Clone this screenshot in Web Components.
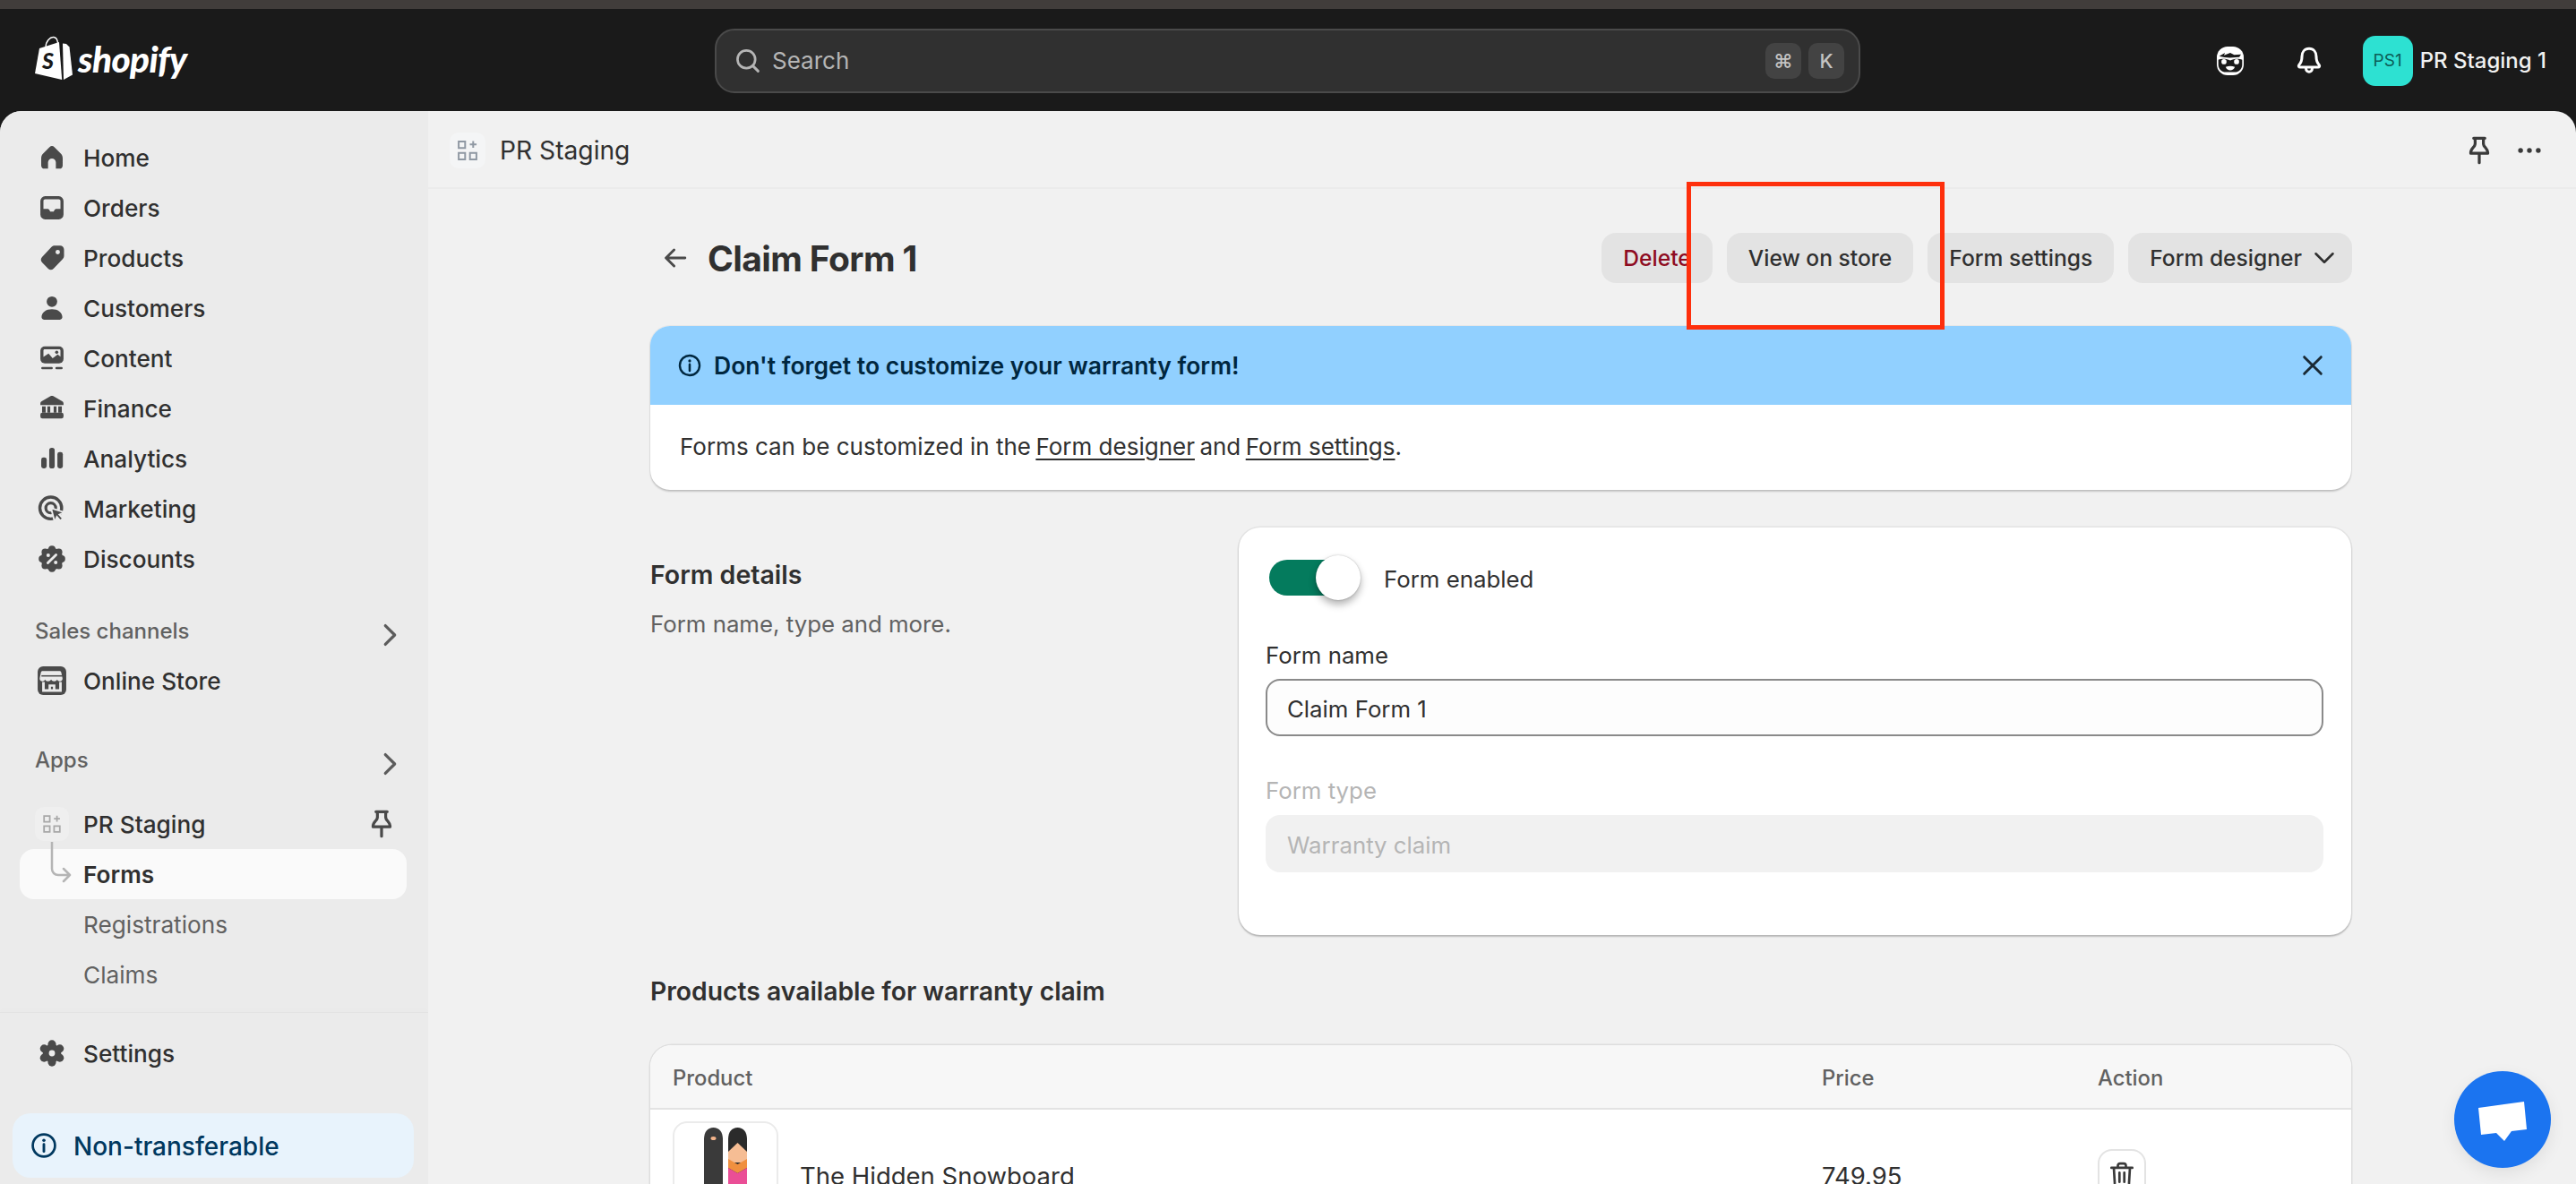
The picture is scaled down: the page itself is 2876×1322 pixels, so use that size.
<!DOCTYPE html>
<html lang="en">
<head>
<meta charset="utf-8">
<title>Claim Form 1</title>
<style>
  html, body { margin: 0; padding: 0; height: 100%; }
  body { width: 2876px; height: 1322px; overflow: hidden; background: #1a1a1a; color: #303030;
         font-family: Inter, "Liberation Sans", sans-serif; font-size: 25px; }
</style>
</head>
<body>
<shop-app></shop-app>

<script>
const ICONS = {
  home: `<path fill="currentColor" d="M10 3.2c-.5 0-1 .2-1.400.6L4.800 7.600c-.7.700-1.100 1.600-1.100 2.600v4.500c0 1 .8 1.800 1.800 1.800H7.700v-3.700a2.300 2.300 0 0 1 4.600 0v3.700h2.200c1 0 1.800-.8 1.800-1.800v-4.500c0-1-.4-1.900-1.100-2.600l-3.800-3.800c-.4-.4-.9-.6-1.400-.6z"/>`,
  orders: `<path fill="currentColor" fill-rule="evenodd" d="M6 3.200h8a2.800 2.800 0 0 1 2.800 2.800v8a2.800 2.800 0 0 1-2.800 2.800H6a2.800 2.800 0 0 1-2.800-2.800V6A2.800 2.800 0 0 1 6 3.200zM6 5c-.6 0-1 .4-1 1v4.600h2.400c.5 0 .9.300 1.100.700l.5 1h2l.5-1c.2-.4.600-.7 1.100-.7H15V6c0-.6-.4-1-1-1z"/>`,
  tag: `<path fill="currentColor" fill-rule="evenodd" d="M11.600 2.800h3.200c1.300 0 2.300 1 2.300 2.300v3.600c0 .8-.3 1.500-.9 2.100l-5.300 5.500c-.9.900-2.200.9-3.100 0l-3.600-3.700c-.9-.9-.9-2.200 0-3.100l5.400-5.800c.5-.6 1.200-.9 2-.9zM13.400 5.300a1.300 1.300 0 1 0 0 2.600 1.300 1.300 0 0 0 0-2.600z"/>`,
  person: `<circle cx="10" cy="6.200" r="3.100" fill="currentColor"/><path fill="currentColor" d="M3.900 15.300c0-2.900 2.700-4.700 6.100-4.700s6.100 1.800 6.100 4.700c0 .8-.6 1.500-1.400 1.500H5.300c-.8 0-1.400-.7-1.400-1.500z"/>`,
  content: `<rect x="3.200" y="3" width="13.600" height="10" rx="2.600" fill="currentColor"/><path fill="#ebebeb" d="M5 5.400c0-.4.300-.7.700-.7h8.600c.4 0 .7.300.7.700v3.700l-1.600-1.300-3 2.200-2.400-2.700L5 9.200z"/><circle cx="12.800" cy="6.500" r=".95" fill="currentColor"/><rect x="3.700" y="15.100" width="6.800" height="1.400" rx=".7" fill="currentColor"/><rect x="12" y="15.100" width="4.300" height="1.400" rx=".7" fill="currentColor"/>`,
  bank: `<path fill="currentColor" d="M9.200 2.800c.5-.3 1.100-.3 1.600 0l5.200 3c.5.300.8.800.8 1.300V8H3.200v-.9c0-.5.300-1 .8-1.300zM4.200 8.800h2.100v3.700H4.200zM7.300 8.800h1.700v3.700H7.300zM11 8.800h1.700v3.700H11zM13.700 8.800h2.100v3.700h-2.100z"/><rect x="3.200" y="12.500" width="13.600" height="3.400" rx="1.200" fill="currentColor"/>`,
  bars: `<rect x="3.700" y="9.400" width="3.200" height="6.400" rx="1.300" fill="currentColor"/><rect x="8.400" y="3.700" width="3.200" height="12.100" rx="1.500" fill="currentColor"/><rect x="13.200" y="6.200" width="3.200" height="9.600" rx="1.300" fill="currentColor"/>`,
  target: `<circle cx="9.300" cy="9.600" r="6.400" fill="none" stroke="currentColor" stroke-width="1.800"/><circle cx="9.300" cy="9.600" r="2.900" fill="none" stroke="currentColor" stroke-width="1.700"/><path fill="currentColor" stroke="#ebebeb" stroke-width="1" d="M9.500 9.700l7.900 2.500-3 1.300 2 2.200-1.500 1.400-2-2.300-1.300 3z"/>`,
  discount: `<g fill="currentColor"><circle cx="10" cy="10" r="6.500"/><circle cx="10" cy="4.300" r="2.100"/><circle cx="10" cy="15.700" r="2.100"/><circle cx="4.300" cy="10" r="2.100"/><circle cx="15.700" cy="10" r="2.100"/><circle cx="6" cy="6" r="2.100"/><circle cx="14" cy="6" r="2.100"/><circle cx="6" cy="14" r="2.100"/><circle cx="14" cy="14" r="2.100"/></g><path d="M12.400 7.600l-4.800 4.800" stroke="#ebebeb" stroke-width="1.500" stroke-linecap="round"/><circle cx="7.800" cy="7.900" r="1.050" fill="#ebebeb"/><circle cx="12.200" cy="12.100" r="1.050" fill="#ebebeb"/>`,
  store: `<rect x="1.600" y="1.600" width="16.800" height="16.800" rx="3.200" fill="currentColor"/><path fill="#ebebeb" d="M5.500 4.400h9c.5 0 .9.300 1 .8l.7 3.300c.2 1-.6 1.900-1.600 1.900-.7 0-1.300-.4-1.500-1-.3.600-1 1-1.800 1-.8 0-1.400-.4-1.800-1-.4.600-1 1-1.800 1-.8 0-1.500-.4-1.800-1-.2.600-.8 1-1.500 1-1 0-1.800-.9-1.600-1.900l.7-3.300c.1-.5.500-.8 1-.8z"/><path fill="none" stroke="#ebebeb" stroke-width="1.500" d="M5 10.800v5h10v-5"/><path fill="#ebebeb" d="M8 12.200h4v3.800h-1.400v-2.500H9.400V16H8z"/><path stroke="currentColor" stroke-width=".8" d="M3.800 7.200h12.400"/>`,
  chevron: `<path fill="none" stroke="currentColor" stroke-width="1.700" stroke-linecap="round" stroke-linejoin="round" d="M7.500 4.500l5.500 5.500-5.500 5.500"/>`,
  chevrondown: `<path fill="none" stroke="currentColor" stroke-width="1.350" stroke-linecap="round" stroke-linejoin="round" d="M5 7.500l5 5 5-5"/>`,
  apps: `<path fill="none" stroke="currentColor" stroke-width="1.100" d="M4.500 4.500h4v4h-4zM4.500 11.500h4v4h-4zM11.500 11.500h4v4h-4zM13.500 4.200v4.200M11.400 6.300h4.200"/>`,
  pin: `<path fill="none" stroke="currentColor" stroke-width="1.700" stroke-linejoin="round" stroke-linecap="round" d="M6.700 2.800h6.600M7.500 2.800c0 1.800.4 3.200-.2 4.300-.5 1-2.300 2.300-2.300 4v.6h10v-.6c0-1.700-1.800-3-2.300-4-.6-1.100-.2-2.500-.2-4.300M10 11.700v5.500"/>`,
  gear: `<g fill="currentColor"><circle cx="10" cy="10" r="5.400"/><circle cx="10" cy="4.700" r="2.400"/><circle cx="10" cy="15.300" r="2.400"/><circle cx="5.400" cy="7.300" r="2.400"/><circle cx="14.600" cy="7.300" r="2.400"/><circle cx="5.400" cy="12.700" r="2.400"/><circle cx="14.600" cy="12.700" r="2.400"/></g><circle cx="10" cy="10" r="1.800" fill="#ebebeb"/>`,
  info: `<circle cx="10" cy="10" r="6.900" fill="none" stroke="currentColor" stroke-width="1.500"/><circle cx="10" cy="6.800" r="1" fill="currentColor"/><path d="M10 9.300v4.400" stroke="currentColor" stroke-width="1.600" stroke-linecap="round"/>`,
  close: `<path d="M4.500 4.500l11 11M15.500 4.500l-11 11" fill="none" stroke="currentColor" stroke-width="1.700" stroke-linecap="round"/>`,
  back: `<path d="M16 10H4.500M9.200 5 4.200 10l5 5" fill="none" stroke="currentColor" stroke-width="1.600" stroke-linecap="round" stroke-linejoin="round"/>`,
  search: `<circle cx="9" cy="9" r="5.800" fill="none" stroke="currentColor" stroke-width="1.600"/><path d="M13.300 13.300l3.400 3.400" stroke="currentColor" stroke-width="1.700" stroke-linecap="round"/>`,
  bell: `<path fill="none" stroke="currentColor" stroke-width="1.600" stroke-linejoin="round" d="M10 2.800c-2.700 0-4.200 2.100-4.200 4.600 0 2.200-.6 3.800-1.700 5-.5.600-.1 1.300.6 1.300h10.600c.7 0 1.100-.7.600-1.300-1.100-1.200-1.700-2.800-1.700-5 0-2.500-1.500-4.600-4.200-4.600zM8.200 13.900v.7a1.800 1.800 0 0 0 3.600 0v-.7"/>`,
  mascot: `<rect x="2.100" y="1.600" width="15.800" height="16.800" rx="6.300" fill="currentColor"/><path fill="#1a1a1a" d="M3.500 7.300l3.400-2.100-.6 1.500 3.700-1.400 2.300 1.200 4-.3-1 1.600-5.500.4-3.300-.3z"/><path fill="#1a1a1a" d="M3 9.400c1.800-.8 4.700-.8 7 .3 2.300-1.100 5.200-1.100 7-.3v2.800c0 2.400-2 4.400-4.400 4.400H7.400C5 16.600 3 14.600 3 12.200z"/><circle cx="6.300" cy="10.500" r="1.500" fill="currentColor"/><circle cx="13.700" cy="10.500" r="1.500" fill="currentColor"/><path fill="currentColor" d="M7.300 13.500c1.700-.7 3.700-.7 5.400 0-.5 1.300-1.500 2-2.700 2s-2.200-.7-2.700-2z"/>`,
  dots: `<circle cx="4.500" cy="10" r="1.500" fill="currentColor"/><circle cx="10" cy="10" r="1.500" fill="currentColor"/><circle cx="15.500" cy="10" r="1.500" fill="currentColor"/>`,
  trash: `<path fill="none" stroke="currentColor" stroke-width="1.500" stroke-linecap="round" stroke-linejoin="round" d="M3.500 5.500h13M7.500 5.500V4.200c0-.8.600-1.400 1.400-1.400h2.200c.8 0 1.400.6 1.400 1.400v1.300M5 5.500l.6 10c.1 1 .9 1.700 1.800 1.700h5.200c.9 0 1.700-.7 1.800-1.700l.6-10M8.500 8.500v5.800M11.500 8.500v5.800"/>`
};

customElements.define('shop-icon', class extends HTMLElement {
  connectedCallback() {
    const root = this.shadowRoot || this.attachShadow({mode: 'open'});
    root.innerHTML = `
      <style>
        :host { display: inline-flex; flex: none; width: var(--icon-size, 38px); height: var(--icon-size, 38px); color: inherit; }
        svg { width: 100%; height: 100%; display: block; }
      </style>
      <svg viewBox="0 0 20 20" aria-hidden="true">${ICONS[this.getAttribute('name')] || ''}</svg>`;
  }
});

customElements.define('shop-logo', class extends HTMLElement {
  constructor() {
    super();
    this.attachShadow({mode: 'open'}).innerHTML = `
      <style>
        :host { display: inline-flex; align-items: center; gap: 6px; color: #fff; }
        svg { width: 43px; height: 50px; display: block; }
        span { font: italic 900 40.500px/1 Lato, "Open Sans", sans-serif; letter-spacing: -.6px; margin-top: 3px; }
      </style>
      <svg viewBox="0 0 43 50">
        <path fill="none" stroke="#fff" stroke-width="1.400" d="M13 13C13 6 18 1 22 1.500c3.500.5 4.500 4.500 4.500 8"/>
        <path fill="#fff" d="M1 42 6 14l22-7 3.200 42z"/>
        <path fill="#fff" d="M32 8.500l4 .5 3.500 3.500 3.500 31-10 5.500z"/>
        <text x="15.500" y="37" text-anchor="middle" font-family="Lato, sans-serif" font-style="italic" font-weight="900" font-size="25" fill="#1a1a1a">S</text>
      </svg>
      <span>shopify</span>`;
  }
});

customElements.define('shop-topbar', class extends HTMLElement {
  constructor() {
    super();
    this.attachShadow({mode: 'open'}).innerHTML = `
      <style>
        :host { display: block; flex: none; background: #1a1a1a; border-top: 10px solid #413d3b; height: 114px; box-sizing: content-box; }
        .row { height: 100%; display: grid; grid-template-columns: 798px 1279px 1fr; align-items: center; padding-top: 1px; box-sizing: border-box; }
        shop-logo { margin-left: 38px; }
        .search { height: 72px; box-sizing: border-box; border: 2px solid #4a4a4a; border-radius: 22px; background: #303030;
                  display: flex; align-items: center; padding: 0 16px 0 18px; color: #b5b5b5; font-size: 26px; }
        .search span.label { margin-left: 10px; flex: 1; }
        .search shop-icon { --icon-size: 34px; }
        kbd { width: 40px; height: 40px; display: flex; align-items: center; justify-content: center; background: #434343;
              border-radius: 10px; font: 500 22px Inter, sans-serif; color: #c4c4c4; margin-left: 8px; }
        .right { display: flex; align-items: center; justify-content: flex-end; padding-right: 33px; color: #fff; }
        .bell { margin: 0 41px 0 50px; }
        .avatar { width: 56px; height: 56px; border-radius: 14px; background: #2de1d2; color: #0c5f58; font-size: 19px; font-weight: 400;
                  display: flex; align-items: center; justify-content: center; }
        .name { margin-left: 8px; font-size: 24px; font-weight: 500; color: #f1f1f1; }
      </style>
      <div class="row">
        <div><shop-logo></shop-logo></div>
        <div class="search">
          <shop-icon name="search"></shop-icon><span class="label">Search</span>
          <kbd>⌘</kbd><kbd>K</kbd>
        </div>
        <div class="right">
          <shop-icon name="mascot"></shop-icon>
          <shop-icon class="bell" name="bell"></shop-icon>
          <span class="avatar">PS1</span><span class="name">PR Staging 1</span>
        </div>
      </div>`;
  }
});

customElements.define('nav-item', class extends HTMLElement {
  constructor() {
    super();
    this.attachShadow({mode: 'open'});
  }
  connectedCallback() {
    const icon = this.getAttribute('icon');
    this.shadowRoot.innerHTML = `
      <style>
        :host { display: flex; align-items: center; height: 56px; margin: 0 24px 0 22px; padding-left: 17px; gap: 16px; position: relative;
                color: #303030; font-size: 26.200px; font-weight: 500; border-radius: 16px; }
        :host([sub]) { color: #616161; font-weight: 400; }
        :host([active]) { background: #fafafa; color: #303030; font-weight: 600; }
        .slot { flex: none; width: 38px; height: 38px; color: #4a4a4a; display: flex; }
        .label { flex: 1; }
      </style>
      <span class="slot">${icon ? `<shop-icon name="${icon}"></shop-icon>` : ''}</span>
      <span class="label"><slot></slot></span>
      <slot name="end"></slot>`;
  }
});

customElements.define('nav-heading', class extends HTMLElement {
  constructor() {
    super();
    this.attachShadow({mode: 'open'}).innerHTML = `
      <style>
        :host { display: flex; align-items: center; justify-content: space-between; height: 56px; padding: 0 26px 0 39px;
                color: #616161; font-size: 24px; font-weight: 500; }
        shop-icon { margin-top: 10px; --icon-size: 38px; color: #5c5c5c; margin-right: -2px; }
      </style>
      <span><slot></slot></span><shop-icon name="chevron"></shop-icon>`;
  }
});

customElements.define('shop-sidebar', class extends HTMLElement {
  constructor() {
    super();
    this.attachShadow({mode: 'open'}).innerHTML = `
      <style>
        :host { display: flex; flex-direction: column; flex: none; width: 478px; background: #ebebeb; box-sizing: border-box; padding-top: 24px; }
        .first { margin-top: 24px; }
        .second { margin-top: 32px; }
        .app { margin-top: 16px; }
        .icon-app { --icon-size: 32px; color: #a8a8a8; }
        .tile { position: absolute; left: 17px; top: 9px; width: 38px; height: 38px; border-radius: 10px; background: #efefef; display: flex; align-items: center; justify-content: center; }
        .pin { color: #4a4a4a; margin: 6px 9px 0 0; --icon-size: 38px; }
        .branch { position: absolute; left: 34px; top: -8px; width: 24px; height: 48px; }
        .scroll-end { margin-top: 14px; height: 1px; background: #e3e3e3; box-shadow: 0 -2px 4px rgba(0,0,0,.04); }
        .settings { margin-top: 17px; }
        .plan { margin: 39px 16px 0 14px; height: 72px; border-radius: 20px; background: #e8f3fc; color: #00385f; display: flex; align-items: center;
                padding-left: 17px; gap: 15px; font-size: 28px; font-weight: 500; --icon-size: 36px; }
        .plan span { padding-top: 2px; }
      </style>
      <nav-item icon="home">Home</nav-item>
      <nav-item icon="orders">Orders</nav-item>
      <nav-item icon="tag">Products</nav-item>
      <nav-item icon="person">Customers</nav-item>
      <nav-item icon="content">Content</nav-item>
      <nav-item icon="bank">Finance</nav-item>
      <nav-item icon="bars">Analytics</nav-item>
      <nav-item icon="target">Marketing</nav-item>
      <nav-item icon="discount">Discounts</nav-item>
      <nav-heading class="first">Sales channels</nav-heading>
      <nav-item icon="store">Online Store</nav-item>
      <nav-heading class="second">Apps</nav-heading>
      <nav-item class="app">PR Staging
        <span slot="end" class="pin"><shop-icon name="pin"></shop-icon></span>
      </nav-item>
      <nav-item active>
        Forms
      </nav-item>
      <nav-item sub>Registrations</nav-item>
      <nav-item sub>Claims</nav-item>
      <div class="scroll-end"></div>
      <nav-item class="settings" icon="gear">Settings</nav-item>
      <div class="plan"><shop-icon name="info"></shop-icon><span>Non-transferable</span></div>`;
    // app tile and branch line sit over the nav rows
    const rows = this.shadowRoot.querySelectorAll('nav-item');
    const tile = document.createElement('span');
    tile.className = 'tile';
    tile.innerHTML = '<shop-icon class="icon-app" name="apps"></shop-icon>';
    rows[10].append(tile);
    const branch = document.createElement('span');
    branch.className = 'branch';
    branch.innerHTML = '<svg viewBox="0 0 24 48" width="24" height="48"><path d="M2 0v30c0 4 3 7 7 7h13M15 30l7 7-7 7" fill="none" stroke="#b5b5b5" stroke-width="2.500" stroke-linecap="round" stroke-linejoin="round"/></svg>';
    rows[11].append(branch);
  }
});

customElements.define('app-header', class extends HTMLElement {
  constructor() {
    super();
    this.attachShadow({mode: 'open'}).innerHTML = `
      <style>
        :host { display: flex; align-items: center; flex: none; height: 87px; box-sizing: border-box; padding: 2px 34px 0 24px; border-bottom: 2px solid #ebebeb; color: #303030; }
        .tile { width: 40px; height: 40px; border-radius: 10px; background: #f4f5f6; display: flex; align-items: center; justify-content: center; color: #8f98a3; --icon-size: 36px; }
        .title { margin-left: 16px; flex: 1; font-size: 28.200px; font-weight: 400; color: #303030; }
        .pin { --icon-size: 38px; color: #3a3a3a; margin-right: 19px; }
        .dots { --icon-size: 36px; color: #3a3a3a; }
      </style>
      <span class="tile"><shop-icon name="apps"></shop-icon></span>
      <span class="title">PR Staging</span>
      <shop-icon class="pin" name="pin"></shop-icon>
      <shop-icon class="dots" name="dots"></shop-icon>`;
  }
});

customElements.define('shop-button', class extends HTMLElement {
  constructor() {
    super();
    this.attachShadow({mode: 'open'}).innerHTML = `
      <style>
        :host { display: inline-flex; align-items: center; height: 56px; box-sizing: border-box; padding: 0 24px; border-radius: 16px; background: #e3e3e3;
                color: #303030; font-size: 24.600px; font-weight: 500; white-space: nowrap; }
        :host([tone="critical"]) { color: #8e0b21; }
        ::slotted(shop-icon) { --icon-size: 38px; margin: 0 -12px 0 6px; }
      </style>
      <slot></slot><slot name="icon"></slot>`;
  }
});

customElements.define('page-title', class extends HTMLElement {
  constructor() {
    super();
    this.attachShadow({mode: 'open'}).innerHTML = `
      <style>
        :host { display: flex; align-items: center; height: 56px; }
        shop-icon.back { margin: 0 0 0 10px; --icon-size: 36px; color: #4a4a4a; }
        h1 { margin: 0 0 0 18px; font-size: 39px; font-weight: 700; color: #303030; flex: 1; letter-spacing: -.6px; }
        .actions { display: flex; gap: 16px; margin-right: -1px; }
      </style>
      <shop-icon class="back" name="back"></shop-icon>
      <h1><slot></slot></h1>
      <div class="actions">
        <shop-button tone="critical">Delete</shop-button>
        <shop-button>View on store</shop-button>
        <shop-button>Form settings</shop-button>
        <shop-button>Form designer<shop-icon slot="icon" name="chevrondown"></shop-icon></shop-button>
      </div>`;
  }
});

customElements.define('info-banner', class extends HTMLElement {
  constructor() {
    super();
    this.attachShadow({mode: 'open'}).innerHTML = `
      <style>
        :host { display: block; margin-top: 48px; border-radius: 22px; background: #fff; overflow: hidden;
                box-shadow: 0 2px 2px rgba(0,0,0,.18), 0 0 0 1px rgba(0,0,0,.04); }
        .head { height: 88px; background: #91d0ff; display: flex; align-items: center; padding: 0 26px 0 29px; color: #00273f; font-size: 26.500px; font-weight: 600; }
        .head shop-icon { --icon-size: 32px; margin-right: 11px; margin-left: -1px; }
        .head span { flex: 1; }
        .head .x { --icon-size: 34px; color: #1a2a35; margin: 0; }
        .body { height: 95px; display: flex; align-items: center; padding: 0 0 3px 33px; box-sizing: border-box; font-size: 26px; color: #303030; }
        a { color: #303030; text-decoration: underline; text-underline-offset: 4px; margin: 0 .21em; }
        a:last-of-type { margin-right: 0; }
      </style>
      <div class="head"><shop-icon name="info"></shop-icon><span>Don't forget to customize your warranty form!</span><shop-icon class="x" name="close"></shop-icon></div>
      <div class="body"><div>Forms can be customized in the<a>Form designer</a>and<a>Form settings</a>.</div></div>`;
  }
});

customElements.define('form-details', class extends HTMLElement {
  constructor() {
    super();
    this.attachShadow({mode: 'open'}).innerHTML = `
      <style>
        :host { display: grid; grid-template-columns: 657px 1fr; margin-top: 42px; }
        h2 { margin: 36px 0 0; font-size: 28.500px; line-height: 34px; font-weight: 600; color: #303030; }
        p { margin: 22px 0 0; font-size: 25.800px; line-height: 32px; color: #616161; }
        .card { height: 455px; box-sizing: border-box; background: #fff; border-radius: 24px; padding: 36px 31px 0 30px;
                box-shadow: 0 2px 2px rgba(0,0,0,.2), 0 0 0 1.500px #e3e3e3; }
        .toggle { display: flex; align-items: center; height: 40px; padding-left: 4px; color: #303030; font-size: 25.800px; }
        .track { width: 73px; height: 40px; position: relative; background: #047b5d; border-radius: 20px 0 0 20px; }
        .thumb { position: absolute; left: 52px; top: -5px; width: 50px; height: 50px; border-radius: 50%; background: #fff;
                 box-shadow: 0 5px 8px rgba(0,0,0,.3), 0 0 2px rgba(0,0,0,.25); }
        .toggle span { margin-left: 55px; padding-top: 2px; }
        label { display: block; margin-top: 48px; line-height: 38px; font-size: 25.800px; color: #303030; }
        .input { margin-top: 7px; height: 64px; box-sizing: border-box; border: 2px solid #8a8a8a; border-radius: 16px; background: #fdfdfd; color: #303030;
                 display: flex; align-items: center; padding: 3px 0 0 22px; font-size: 25.800px; }
        .off { color: #b5b5b5; margin-top: 42px; }
        .input.dis { margin-top: 8px; background: #f1f1f1; border-color: #f1f1f1; color: #b5b5b5; }
      </style>
      <div>
        <h2>Form details</h2>
        <p>Form name, type and more.</p>
      </div>
      <div class="card">
        <div class="toggle"><div class="track"><div class="thumb"></div></div><span>Form enabled</span></div>
        <label>Form name</label>
        <div class="input">Claim Form 1</div>
        <label class="off">Form type</label>
        <div class="input dis">Warranty claim</div>
      </div>`;
  }
});

customElements.define('product-table', class extends HTMLElement {
  constructor() {
    super();
    this.attachShadow({mode: 'open'}).innerHTML = `
      <style>
        :host { display: block; }
        h2 { margin: 45px 0 0; font-size: 28.300px; line-height: 36px; font-weight: 600; color: #303030; }
        .table { margin-top: 42px; background: #fff; border-radius: 24px 24px 0 0; box-shadow: 0 0 0 1.500px #dedede; }
        .row { display: grid; grid-template-columns: 1283px 308px 1fr; align-items: center; padding-left: 25px; }
        .head { height: 72px; background: #f7f7f7; border-radius: 24px 24px 0 0; border-bottom: 2px solid #e3e3e3; box-sizing: border-box; padding-top: 2px;
                font-size: 23.800px; font-weight: 500; color: #616161; }
        .body { padding-top: 13px; padding-bottom: 14px; font-size: 27.500px; color: #303030; }
        .prod { display: flex; align-items: center; gap: 24px; }
        .prod span, .price { padding-top: 3px; }
        .thumb { width: 118px; height: 118px; border: 2px solid #ebebeb; border-radius: 16px; box-sizing: border-box; flex: none; }
        .thumb svg { display: block; width: 100%; height: 100%; }
        .del { width: 54px; height: 58px; margin-top: 2px; box-sizing: border-box; border: 2px solid #e3e3e3; border-radius: 16px; display: flex; align-items: center; justify-content: center; color: #3a3a3a; --icon-size: 36px; }
      </style>
      <h2>Products available for warranty claim</h2>
      <div class="table">
        <div class="row head"><span>Product</span><span>Price</span><span>Action</span></div>
        <div class="row body">
          <div class="prod">
            <div class="thumb"><svg viewBox="0 0 114 114">
              <path fill="#3a3a3a" d="M33 110V18C33 10 37 5 43.500 5S54 10 54 18V110z"/>
              <path fill="#2b2b2b" d="M60 110V18C60 10 64 5 70.500 5S81 10 81 18V110z"/>
              <path fill="#f6bd94" d="M60 32 70.500 22 81 32V44H60z"/>
              <path fill="#f0903f" d="M60 40l10.500 6L81 40v10l-10.500 6L60 50z"/>
              <path fill="#ea4e96" d="M60 50l10.500 6L81 50v60H60z"/>
              <ellipse cx="43.500" cy="17" rx="3" ry="2" fill="#f3b48b"/>
            </svg></div>
            <span>The Hidden Snowboard</span>
          </div>
          <span class="price">749.95</span>
          <div class="del"><shop-icon name="trash"></shop-icon></div>
        </div>
      </div>`;
  }
});

customElements.define('chat-launcher', class extends HTMLElement {
  constructor() {
    super();
    this.attachShadow({mode: 'open'}).innerHTML = `
      <style>
        :host { position: absolute; left: 2740px; top: 1196px; width: 108px; height: 108px; border-radius: 50%; background: #1b74f0; box-shadow: 0 6px 18px rgba(0,0,0,.08); }
        svg { display: block; width: 100%; height: 100%; }
      </style>
      <svg viewBox="0 0 108 108"><path fill="#fff" d="M27 41 78 34 81 65 64 67 56 78 47 69 30 71z"/></svg>`;
  }
});

customElements.define('note-box', class extends HTMLElement {
  constructor() {
    super();
    this.attachShadow({mode: 'open'}).innerHTML = `
      <style>
        :host { position: absolute; left: 1883px; top: 203px; width: 288px; height: 165px; box-sizing: border-box; border: 5px solid #fe2f0c; pointer-events: none; }
      </style>`;
  }
});

customElements.define('shop-app', class extends HTMLElement {
  constructor() {
    super();
    this.attachShadow({mode: 'open'}).innerHTML = `
      <style>
        :host { display: flex; flex-direction: column; width: 2876px; height: 1322px; position: relative; overflow: hidden; }
        .panel { flex: 1; min-height: 0; display: flex; border-radius: 24px 24px 0 0; overflow: hidden; background: #f1f1f1; }
        main { flex: 1; min-width: 0; display: flex; flex-direction: column; }
        .page { padding: 49px 251px 0 248px; }
      </style>
      <shop-topbar></shop-topbar>
      <div class="panel">
        <shop-sidebar></shop-sidebar>
        <main>
          <app-header></app-header>
          <div class="page">
            <page-title>Claim Form 1</page-title>
            <info-banner></info-banner>
            <form-details></form-details>
            <product-table></product-table>
          </div>
        </main>
      </div>
      <note-box></note-box>
      <chat-launcher></chat-launcher>`;
  }
});
</script>
</body>
</html>
